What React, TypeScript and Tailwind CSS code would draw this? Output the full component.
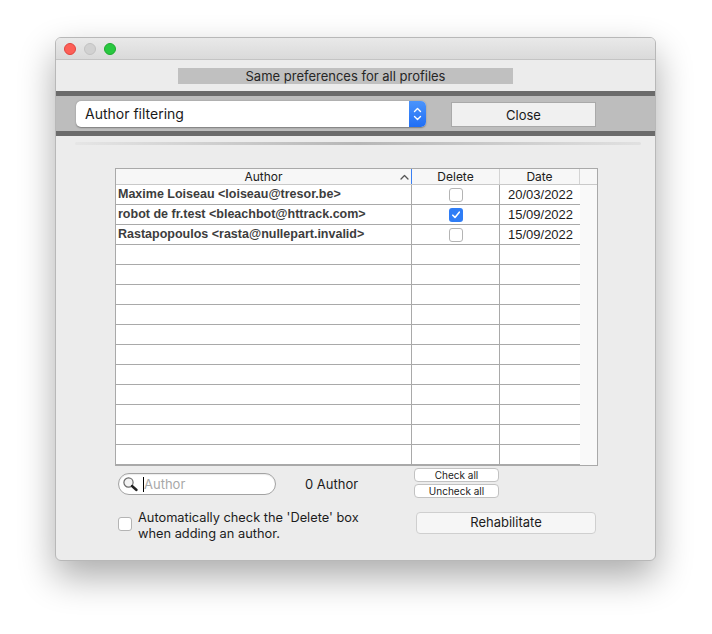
import React from "react";

const ui = { fontFamily: "Inter, 'Liberation Sans', sans-serif" };
const arial = { fontFamily: "'Liberation Sans', Arial, sans-serif" };

const rows = [
  { a: "Maxime Loiseau <loiseau@tresor.be>", c: false, d: "20/03/2022" },
  { a: "robot de fr.test <bleachbot@httrack.com>", c: true, d: "15/09/2022" },
  { a: "Rastapopoulos <rasta@nullepart.invalid>", c: false, d: "15/09/2022" },
];

function Check({ on }: { on: boolean }) {
  if (on)
    return (
      <div className="w-[14px] h-[14px] rounded-[3px] bg-[#2f7df6] flex items-center justify-center">
        <svg width="10" height="10" viewBox="0 0 10 10">
          <path d="M1.8 5.2 L4 7.4 L8.3 2.2" fill="none" stroke="white" strokeWidth="1.6" strokeLinecap="round" strokeLinejoin="round" />
        </svg>
      </div>
    );
  return <div className="w-[14px] h-[14px] rounded-[3px] bg-white border border-[#b4b4b4]" />;
}

export default function App() {
  const all = Array.from({ length: 14 }, (_, i) => rows[i]);
  return (
    <div className="w-[712px] h-[634px] bg-white pt-[37px] pl-[55px]" style={ui}>
      <div className="w-[601px] h-[524px] rounded-[6px] bg-[#ececec] border border-[#b8b8b8] shadow-[0_16px_36px_rgba(0,0,0,0.33)] overflow-hidden flex flex-col">
        {/* title bar */}
        <div className="h-[22px] shrink-0 bg-gradient-to-b from-[#e9e9e9] to-[#dadada] border-b border-[#c4c4c4] flex items-center pl-[8px] gap-[8px]">
          <div className="w-[12px] h-[12px] rounded-full bg-[#fd5f57] border border-[#e0443e]" />
          <div className="w-[12px] h-[12px] rounded-full bg-[#d1d1d1] border border-[#c2c2c2]" />
          <div className="w-[12px] h-[12px] rounded-full bg-[#29c840] border border-[#1eaa2f]" />
        </div>

        {/* same preferences */}
        <div className="mt-[8px] ml-[122px] w-[335px] h-[16px] bg-[#c0c0c0] flex items-center justify-center text-[13px] text-[#262626] leading-none">
          Same preferences for all profiles
        </div>

        {/* band */}
        <div className="mt-[7px] border-t-[5px] border-b-[5px] border-[#6b6b6b] bg-[#bdbdbd] h-[45px] flex items-center">
          <div className="ml-[20px] w-[350px] h-[26px] rounded-[5px] bg-white shadow-[0_0.5px_1.5px_rgba(0,0,0,0.35)] flex items-center justify-between">
            <span className="ml-[9px] text-[14px] text-[#1a1a1a]">Author filtering</span>
            <div className="w-[17px] h-[26px] rounded-r-[5px] bg-gradient-to-b from-[#4b94fb] to-[#1f6ef5] flex items-center justify-center">
              <svg width="9" height="16" viewBox="0 0 9 16">
                <path d="M1.5 5.5 L4.5 2.5 L7.5 5.5 M1.5 10.5 L4.5 13.5 L7.5 10.5" fill="none" stroke="white" strokeWidth="1.4" strokeLinecap="round" strokeLinejoin="round" />
              </svg>
            </div>
          </div>
          <div className="ml-[25px] mt-[1px] w-[145px] h-[25px] bg-[#f0f0f0] border border-[#a9a9a9] flex items-center justify-center text-[13px] text-[#1a1a1a] pt-[3px]">
            Close
          </div>
        </div>

        {/* separator */}
        <div className="mt-[6px] ml-[19px] w-[566px] h-[3px] bg-gradient-to-r from-[#e4e4e4] via-[#a9a9a9] to-[#dedede] rounded-full opacity-80" />

        {/* table */}
        <div className="mt-[23px] ml-[59px] w-[483px] border border-[#a9a9a9] bg-white flex flex-col">
          <div className="h-[16px] flex bg-[#f7f7f7] border-b border-[#c9c9c9] text-[12px] text-[#202020] leading-none">
            <div className="w-[296px] border-r border-[#3a7ff2] relative flex items-center justify-center">
              Author
              <svg className="absolute right-[2px] top-[5px]" width="9" height="6" viewBox="0 0 9 6">
                <path d="M1 5 L4.5 1.5 L8 5" fill="none" stroke="#555" strokeWidth="1.3" strokeLinecap="round" strokeLinejoin="round" />
              </svg>
            </div>
            <div className="w-[88px] border-r border-[#d4d4d4] flex items-center justify-center">Delete</div>
            <div className="w-[80px] border-r border-[#d4d4d4] flex items-center justify-center">Date</div>
            <div className="flex-1" />
          </div>
          <div className="flex">
            <div className="w-[464px] flex flex-col">
              {all.map((r, i) => (
                <div key={i} className="h-[20px] flex border-b border-[#a9a9a9]">
                  <div className="w-[296px] border-r border-[#a9a9a9] flex items-center pl-[2px] text-[12.5px] font-bold text-[#3d3d3d]" style={arial}>
                    {r ? r.a : ""}
                  </div>
                  <div className="w-[88px] border-r border-[#a9a9a9] flex items-center justify-center">
                    {r ? <Check on={r.c} /> : null}
                  </div>
                  <div className="w-[80px] flex items-center pl-[8px] text-[13px] text-[#1c1c1c]" style={arial}>
                    {r ? r.d : ""}
                  </div>
                </div>
              ))}
            </div>
            <div className="flex-1 bg-[#f9f9f9]" />
          </div>
        </div>

        {/* controls row */}
        <div className="mt-[2px] ml-[59px] flex items-start">
          <div className="w-[299px] flex items-center pt-[5px]">
            <div className="ml-[3px] w-[158px] h-[22px] rounded-full border border-[#a3a3a3] bg-white flex items-center shadow-[inset_0_1px_1px_rgba(0,0,0,0.08)]">
              <svg className="ml-[3px]" width="17" height="16" viewBox="0 0 17 16">
                <circle cx="6.5" cy="6.5" r="4.6" fill="#f4f4f4" stroke="#6a6a6a" strokeWidth="1.2" />
                <path d="M10 10 L14.5 14" stroke="#222" strokeWidth="2.4" strokeLinecap="round" />
              </svg>
              <div className="ml-[4px] w-[1px] h-[15px] bg-black" />
              <span className="text-[13px] text-[#a8a8a8] leading-none">Author</span>
            </div>
            <span className="ml-[29px] text-[13px] text-[#1c1c1c] leading-none">0 Author</span>
          </div>
          <div className="flex flex-col gap-[2px]">
            <div className="w-[85px] h-[14px] rounded-[4px] bg-white border border-[#c2c2c2] flex items-center justify-center text-[10px] text-[#1c1c1c] leading-none">
              Check all
            </div>
            <div className="w-[85px] h-[14px] rounded-[4px] bg-white border border-[#c2c2c2] flex items-center justify-center text-[10px] text-[#1c1c1c] leading-none">
              Uncheck all
            </div>
          </div>
        </div>

        {/* bottom row */}
        <div className="mt-[12px] ml-[62px] flex items-start">
          <div className="w-[236px] flex items-start">
            <div className="mt-[7px] w-[14px] h-[14px] rounded-[3px] bg-white border border-[#b4b4b4] shrink-0" />
            <div className="ml-[6px] text-[12.8px] leading-[16px] text-[#1c1c1c] whitespace-nowrap">
              Automatically check the 'Delete' box
              <br />
              when adding an author.
            </div>
          </div>
          <div className="ml-[62px] mt-[2px] w-[180px] h-[22px] rounded-[4px] bg-[#f6f6f6] border border-[#cfcfcf] flex items-center justify-center text-[13px] text-[#1c1c1c]">
            Rehabilitate
          </div>
        </div>
      </div>
    </div>
  );
}
